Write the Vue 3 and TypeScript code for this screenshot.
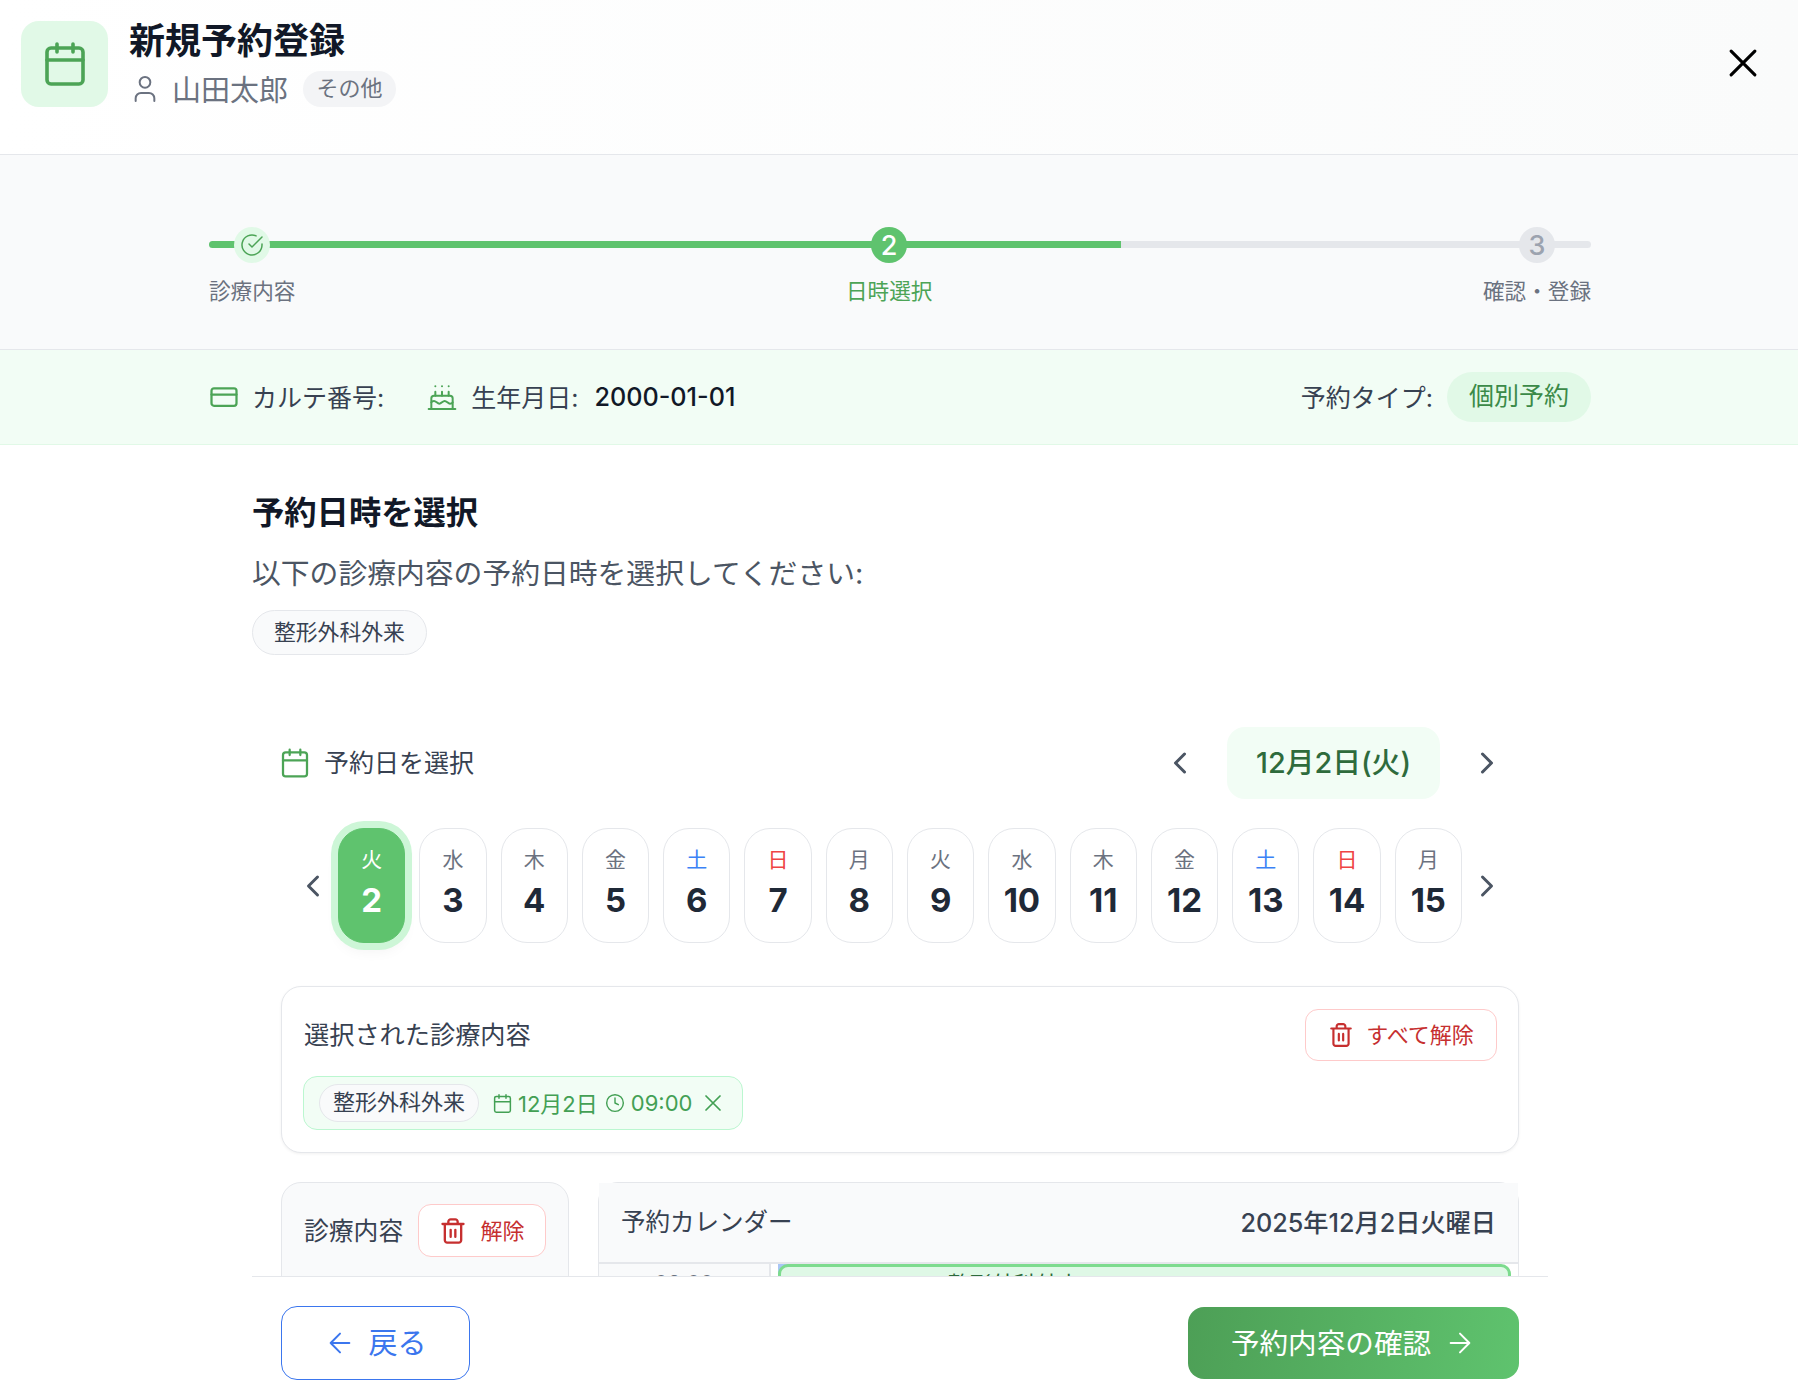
<template>
  <div class="page">
    <header class="top">
      <div class="top-icon">
        <svg width="48" height="48" viewBox="0 0 24 24" class="ic" stroke-width="1.8">
          <path d="M8 2v4M16 2v4M3 10h18" />
          <rect x="3" y="4" width="18" height="18" rx="2" />
        </svg>
      </div>
      <div class="top-text">
        <h1>新規予約登録</h1>
        <div class="patient">
          <svg width="32" height="32" viewBox="0 0 24 24" class="ic" stroke-width="1.5">
            <path d="M19 21v-2a4 4 0 0 0-4-4H9a4 4 0 0 0-4 4v2" />
            <circle cx="12" cy="7" r="4" />
          </svg>
          <span class="patient-name">山田太郎</span>
          <span class="patient-tag">その他</span>
        </div>
      </div>
      <button class="close">
        <svg width="38" height="38" viewBox="0 0 24 24" class="ic" stroke-width="2">
          <path d="M4.5 4.5l15 15M19.5 4.5l-15 15" />
        </svg>
      </button>
    </header>

    <section class="stepper">
      <div class="steps">
        <div class="track"><div class="track-fill"></div></div>
        <div v-for="s in steps" :key="s.label" class="step" :class="s.state">
          <div class="step-dot">
            <svg v-if="s.state === 'done'" width="24" height="24" viewBox="0 0 24 24" class="ic" stroke-width="1.5">
              <path d="M22 11.08V12a10 10 0 1 1-5.93-9.14" />
              <path d="m9 11 3 3L22 4" />
            </svg>
            <template v-else>{{ s.no }}</template>
          </div>
          <div class="step-label">{{ s.label }}</div>
        </div>
      </div>
    </section>

    <section class="infobar">
      <div class="info-inner">
        <svg width="30" height="30" viewBox="0 0 24 24" class="ic info-card" stroke-width="1.8">
          <rect x="2" y="5" width="20" height="14" rx="2" />
          <path d="M2 10h20" />
        </svg>
        <span class="info-label info-first">カルテ番号:</span>
        <svg width="32" height="32" viewBox="0 0 24 24" class="ic info-cake" stroke-width="1.5">
          <path d="M20 21v-8a2 2 0 0 0-2-2H6a2 2 0 0 0-2 2v8" />
          <path d="M4 16s.5-1 2-1 2.5 2 4 2 2.5-2 4-2 2.5 2 4 2 2-1 2-1" />
          <path d="M2 21h20M7 8v3M12 8v3M17 8v3M7 4h.01M12 4h.01M17 4h.01" />
        </svg>
        <span class="info-label info-birth">生年月日:</span>
        <span class="info-value">2000-01-01</span>
        <span class="info-label info-type">予約タイプ:</span>
        <span class="info-pill">個別予約</span>
      </div>
    </section>

    <main class="body">
      <div class="content">
        <h2>予約日時を選択</h2>
        <p class="lead">以下の診療内容の予約日時を選択してください:</p>
        <span class="dept-pill">整形外科外来</span>

        <div class="inner">
          <div class="date-row">
            <svg width="32" height="32" viewBox="0 0 24 24" class="ic date-ic" stroke-width="1.7">
              <path d="M8 2v4M16 2v4M3 10h18" />
              <rect x="3" y="4" width="18" height="18" rx="2" />
            </svg>
            <span class="date-title">予約日を選択</span>
            <button class="nav nav-pad">
              <svg width="36" height="36" viewBox="0 0 24 24" class="ic" stroke-width="2"><path d="m15 18-6-6 6-6" /></svg>
            </button>
            <div class="date-pill">12月2日(火)</div>
            <button class="nav nav-pad">
              <svg width="36" height="36" viewBox="0 0 24 24" class="ic" stroke-width="2"><path d="m9 18 6-6-6-6" /></svg>
            </button>
          </div>

          <div class="days">
            <button class="nav day-prev">
              <svg width="36" height="36" viewBox="0 0 24 24" class="ic" stroke-width="2"><path d="m15 18-6-6 6-6" /></svg>
            </button>
            <div
              v-for="(d, i) in days"
              :key="d.n"
              class="day"
              :class="{ selected: i === 0, sat: d.w === '土', sun: d.w === '日' }"
            >
              <span class="day-w">{{ d.w }}</span>
              <span class="day-n">{{ d.n }}</span>
            </div>
            <button class="nav day-next">
              <svg width="36" height="36" viewBox="0 0 24 24" class="ic" stroke-width="2"><path d="m9 18 6-6-6-6" /></svg>
            </button>
          </div>

          <div class="picked">
            <div class="picked-head">
              <span class="picked-title">選択された診療内容</span>
              <button class="btn-danger btn-all">
                <svg width="26" height="26" viewBox="0 0 24 24" class="ic" stroke-width="2">
                  <path d="M3 6h18M19 6v14c0 1-1 2-2 2H7c-1 0-2-1-2-2V6M8 6V4c0-1 1-2 2-2h4c1 0 2 1 2 2v2M10 11v6M14 11v6" />
                </svg>
                <span class="up">すべて解除</span>
              </button>
            </div>
            <div class="chip">
              <span class="chip-dept">整形外科外来</span>
              <svg width="21" height="21" viewBox="0 0 24 24" class="ic chip-cal" stroke-width="1.7">
                <path d="M8 2v4M16 2v4M3 10h18" />
                <rect x="3" y="4" width="18" height="18" rx="2" />
              </svg>
              <span class="chip-date">12月2日</span>
              <svg width="20" height="20" viewBox="0 0 24 24" class="ic chip-clock" stroke-width="1.7">
                <circle cx="12" cy="12" r="10" />
                <path d="M12 6v6l4 2" />
              </svg>
              <span class="chip-time">09:00</span>
              <svg width="28" height="28" viewBox="0 0 24 24" class="ic chip-x" stroke-width="1.5">
                <path d="M18 6 6 18M6 6l12 12" />
              </svg>
            </div>
          </div>

          <div class="split">
            <div class="side">
              <div class="side-head">
                <span class="side-title">診療内容</span>
                <button class="btn-danger btn-clear">
                  <svg width="28" height="28" viewBox="0 0 24 24" class="ic" stroke-width="2">
                    <path d="M3 6h18M19 6v14c0 1-1 2-2 2H7c-1 0-2-1-2-2V6M8 6V4c0-1 1-2 2-2h4c1 0 2 1 2 2v2M10 11v6M14 11v6" />
                  </svg>
                  <span class="up">解除</span>
                </button>
              </div>
            </div>
            <div class="cal">
              <div class="cal-head">
                <span class="cal-title">予約カレンダー</span>
                <span class="cal-date">2025年12月2日火曜日</span>
              </div>
              <div class="cal-row">
                <div class="cal-time">09:00</div>
                <div class="cal-slot">
                  <div class="cal-event">09:00 - 09:30 整形外科外来</div>
                </div>
              </div>
            </div>
          </div>
        </div>
      </div>
    </main>

    <footer class="foot">
      <button class="btn-back">
        <svg width="32" height="32" viewBox="0 0 24 24" class="ic" stroke-width="1.5">
          <path d="m12 19-7-7 7-7M19 12H5" />
        </svg>
        <span class="up">戻る</span>
      </button>
      <button class="btn-next">
        <span class="up">予約内容の確認</span>
        <svg width="32" height="32" viewBox="0 0 24 24" class="ic" stroke-width="1.5">
          <path d="M5 12h14M12 5l7 7-7 7" />
        </svg>
      </button>
    </footer>
  </div>
</template>

<script setup lang="ts">
interface Step {
  no: number
  label: string
  state: 'done' | 'active' | 'todo'
}

const steps: Step[] = [
  { no: 1, label: '診療内容', state: 'done' },
  { no: 2, label: '日時選択', state: 'active' },
  { no: 3, label: '確認・登録', state: 'todo' },
]

const weekdays = ['火', '水', '木', '金', '土', '日', '月']
const days = Array.from({ length: 14 }, (_, i) => ({
  n: i + 2,
  w: weekdays[i % 7],
}))
</script>

<style>
html,
body {
  margin: 0;
  background: #fff;
}
</style>

<style scoped>
.page {
  width: 1798px;
  height: 1392px;
  display: flex;
  flex-direction: column;
  overflow: hidden;
  background: #fff;
  font-family: Inter, "Noto Sans CJK JP", sans-serif;
  color: #111827;
}

button {
  font-family: inherit;
  background: none;
  border: 0;
  padding: 0;
  display: flex;
  align-items: center;
  justify-content: center;
}

.ic {
  fill: none;
  stroke: currentColor;
  stroke-linecap: round;
  stroke-linejoin: round;
  flex: none;
  display: block;
}

/* the CJK fallback sits a little low in the line box */
.up {
  padding-bottom: 4px;
}

/* header */
.top {
  height: 155px;
  flex: none;
  box-sizing: border-box;
  display: flex;
  padding: 21px 36px 0 21px;
  border-bottom: 1px solid #e5e7eb;
  background: linear-gradient(to right, #fff, #fafbfb);
}

.top-icon {
  width: 87px;
  height: 86px;
  border-radius: 18px;
  background: #e1f9e7;
  color: #4ca456;
  display: flex;
  align-items: center;
  justify-content: center;
}

.top-text {
  margin-left: 21px;
}

h1 {
  margin: 0;
  font-size: 36px;
  line-height: 40px;
  font-weight: 700;
  color: #111827;
}

.patient {
  margin-top: 10px;
  height: 36px;
  display: flex;
  align-items: center;
  color: #6b7280;
}

.patient-name {
  margin-left: 11px;
  padding-bottom: 3px;
  font-size: 29px;
}

.patient-tag {
  margin-left: 15px;
  height: 36px;
  line-height: 35px;
  padding: 0 13.5px;
  border-radius: 18px;
  background: #f3f4f6;
  font-size: 22px;
}

.close {
  margin-left: auto;
  margin-top: 23px;
  width: 38px;
  height: 38px;
  color: #000;
}

/* stepper */
.stepper {
  height: 195px;
  flex: none;
  box-sizing: border-box;
  padding-top: 72px;
  background: #f9fafb;
  border-bottom: 1px solid #e5e7eb;
}

.steps {
  position: relative;
  width: 1382px;
  margin-left: 209px;
  display: flex;
  justify-content: space-between;
}

.track {
  position: absolute;
  left: 0;
  right: 0;
  top: 14px;
  height: 7px;
  border-radius: 4px;
  background: #e5e7eb;
  overflow: hidden;
}

.track-fill {
  width: 66%;
  height: 100%;
  background: #5fc36e;
}

.step {
  position: relative;
  display: flex;
  flex-direction: column;
  align-items: center;
}

.step-dot {
  width: 36px;
  height: 36px;
  border-radius: 50%;
  display: flex;
  align-items: center;
  justify-content: center;
  font-size: 27px;
  font-weight: 500;
}

.step.done .step-dot {
  background: #e1f9e7;
  color: #4ca456;
}

.step.active .step-dot {
  background: #5fc36e;
  color: #fff;
}

.step.todo .step-dot {
  background: #e5e7eb;
  color: #9ca3af;
}

.step-label {
  margin-top: 14px;
  font-size: 21.6px;
  line-height: 28px;
  color: #6b7280;
}

.step.active .step-label {
  color: #4ca456;
}

/* info bar */
.infobar {
  height: 95px;
  flex: none;
  box-sizing: border-box;
  background: #f2fdf5;
  border-bottom: 1px solid #e1f9e7;
  display: flex;
  align-items: center;
}

.info-inner {
  width: 1382px;
  margin-left: 209px;
  display: flex;
  align-items: center;
  font-size: 25px;
}

.info-card,
.info-cake {
  color: #4ca456;
}

.info-cake {
  margin-left: 42px;
}

.info-label {
  margin-left: 14px;
  padding-bottom: 3px;
  color: #374151;
}

.info-first {
  margin-left: 13px;
}

.info-birth {
  margin-left: 13px;
}

.info-value {
  margin-left: 16px;
  font-size: 25.2px;
  font-weight: 500;
  color: #111827;
}

.info-type {
  margin-left: auto;
}

.info-pill {
  margin-left: 14px;
  height: 50px;
  line-height: 48px;
  padding: 0 22px;
  border-radius: 25px;
  background: #e1f9e7;
  color: #3b8a48;
}

/* main */
.body {
  flex: 1;
  min-height: 0;
  overflow: hidden;
}

.content {
  width: 1296px;
  margin-left: 252px;
  padding-top: 46px;
}

h2 {
  margin: 0;
  font-size: 32.3px;
  line-height: 44px;
  font-weight: 700;
  color: #111827;
}

.lead {
  margin: 20px 0 0;
  font-size: 28.8px;
  line-height: 38px;
  color: #4b5563;
}

.dept-pill {
  display: inline-block;
  margin-top: 17px;
  height: 45px;
  line-height: 42px;
  box-sizing: border-box;
  padding: 0 21px;
  border: 1px solid #e5e7eb;
  border-radius: 23px;
  background: #f9fafb;
  font-size: 21.8px;
  color: #374151;
}

.inner {
  padding: 72px 29px 0;
}

.date-row {
  display: flex;
  align-items: center;
  height: 72px;
}

.date-ic {
  margin-left: -2px;
  color: #4ca456;
}

.date-title {
  margin-left: 13px;
  margin-right: auto;
  padding-bottom: 4px;
  font-size: 25px;
  color: #374151;
}

.nav {
  color: #4b5563;
}

.nav-pad {
  padding: 14px;
}

.date-pill {
  margin: 0 15px;
  width: 213px;
  height: 72px;
  line-height: 71px;
  text-align: center;
  border-radius: 18px;
  background: #f2fdf5;
  font-size: 28.8px;
  font-weight: 500;
  color: #2e6b3c;
}

.days {
  margin-top: 29px;
  display: flex;
  align-items: center;
  gap: 14px;
}

.day-prev {
  margin: 0 -7px 0 14px;
}

.day-next {
  margin: 0 14px 0 -7px;
}

.day {
  flex: 1;
  height: 115px;
  box-sizing: border-box;
  padding-top: 17px;
  border: 1px solid #e5e7eb;
  border-radius: 26px;
  background: #fff;
  display: flex;
  flex-direction: column;
  align-items: center;
}

.day-w {
  font-size: 21px;
  line-height: 28px;
  color: #6b7280;
}

.day-n {
  margin-top: 6px;
  font-size: 33px;
  line-height: 40px;
  font-weight: 700;
  color: #1f2937;
}

.day.sat .day-w {
  color: #3b82f6;
}

.day.sun .day-w {
  color: #ef4444;
}

.day.selected {
  background: #5fc36e;
  border-color: #5fc36e;
  box-shadow: 0 0 0 7px #cdf6d7, 0 8px 14px rgba(0, 0, 0, 0.05);
}

.day.selected .day-w,
.day.selected .day-n {
  color: #fff;
}

.picked {
  margin-top: 43px;
  box-sizing: border-box;
  padding: 22px 21px 22px 22px;
  border: 1px solid #e5e7eb;
  border-radius: 20px;
  background: #fff;
  box-shadow: 0 1px 3px rgba(0, 0, 0, 0.06);
}

.picked-head {
  display: flex;
  align-items: center;
  justify-content: space-between;
}

.picked-title {
  padding-bottom: 4px;
  font-size: 25.2px;
  color: #374151;
}

.side-title {
  padding-bottom: 4px;
  font-size: 24.8px;
  color: #374151;
}

.btn-danger {
  box-sizing: border-box;
  border: 1px solid #fecaca;
  border-radius: 13px;
  background: #fff;
  color: #c62f2f;
  font-size: 22px;
}

.btn-all {
  width: 192px;
  height: 52px;
  gap: 12px;
}

.chip {
  margin: 15px 0 0 -1px;
  display: inline-flex;
  align-items: center;
  height: 54px;
  box-sizing: border-box;
  padding: 0 15px;
  border: 1px solid #bbf7d0;
  border-radius: 14px;
  background: #f2fdf5;
  color: #43a054;
  font-size: 22px;
}

.chip-dept {
  width: 160px;
  height: 38px;
  line-height: 35px;
  text-align: center;
  box-sizing: border-box;
  border: 1px solid #e5e7eb;
  border-radius: 19px;
  background: #f9fafb;
  color: #374151;
}

.chip-cal {
  margin-left: 13px;
}

.chip-date {
  margin-left: 5px;
  padding-bottom: 2px;
}

.chip-clock {
  margin-left: 7px;
}

.chip-time {
  margin-left: 6px;
}

.chip-x {
  margin-left: 7px;
}

.split {
  margin-top: 29px;
  display: grid;
  grid-template-columns: 288px 1fr;
  gap: 29px;
  height: 300px;
}

.side {
  box-sizing: border-box;
  padding: 21px 22px 0 22px;
  border: 1px solid #e5e7eb;
  border-radius: 20px;
  background: #f9fafb;
}

.side-head {
  display: flex;
  align-items: center;
  justify-content: space-between;
}

.btn-clear {
  width: 128px;
  height: 53px;
  gap: 13px;
}

.cal {
  border: 1px solid #e5e7eb;
  border-radius: 20px;
  background: #fff;
}

.cal-head {
  height: 81px;
  box-sizing: border-box;
  padding: 0 22px;
  display: flex;
  align-items: center;
  justify-content: space-between;
  background: #f9fafb;
  border-bottom: 2px solid #e5e7eb;
  color: #374151;
}

.cal-title {
  padding-bottom: 4px;
  font-size: 24.5px;
}

.cal-date {
  padding-bottom: 4px;
  font-size: 25.2px;
  font-weight: 500;
}

.cal-row {
  display: flex;
}

.cal-time {
  width: 172px;
  height: 80px;
  padding-top: 7px;
  box-sizing: border-box;
  text-align: center;
  background: #f9fafb;
  border-right: 2px solid #e5e7eb;
  font-size: 21px;
  line-height: 26px;
  color: #6b7280;
}

.cal-slot {
  flex: 1;
  margin: 0 7px;
  height: 70px;
  background: linear-gradient(to right, #a8c6f5 10px, transparent 10px);
}

.cal-event {
  height: 70px;
  box-sizing: border-box;
  padding: 3px 0 0 15px;
  border: 3px solid #7ddb8e;
  border-radius: 10px;
  background: #dff8e6;
  font-size: 22px;
  line-height: 28px;
  color: #2e6b3c;
}

/* footer */
.foot {
  position: relative;
  flex: none;
  width: 1296px;
  height: 116px;
  margin-left: 252px;
  box-sizing: border-box;
  padding: 29px 29px 0;
  border-top: 1px solid #e5e7eb;
  background: #fff;
  display: flex;
  justify-content: space-between;
  align-items: flex-start;
}

.btn-back {
  width: 189px;
  height: 74px;
  gap: 12px;
  box-sizing: border-box;
  border: 1px solid #3b76ee;
  border-radius: 16px;
  color: #3b76ee;
  font-size: 29px;
}

.btn-next {
  width: 331px;
  height: 72px;
  margin-top: 1px;
  gap: 13px;
  border-radius: 16px;
  background: linear-gradient(100deg, #4d9f56, #5fc36e);
  color: #fff;
  font-size: 28.6px;
}
</style>
